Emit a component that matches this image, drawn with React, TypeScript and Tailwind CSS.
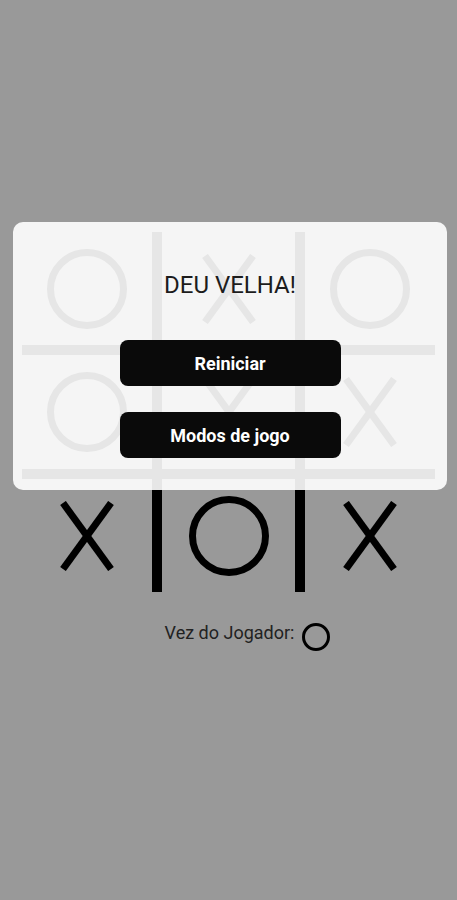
type Mark = 'X' | 'O';

const board: Mark[] = ['O', 'X', 'O', 'O', 'X', 'X', 'X', 'O', 'X'];

function XMark() {
  return (
    <svg width="56" height="70" viewBox="0 0 56 70" className="block">
      <line x1="4" y1="2" x2="52" y2="68" stroke="black" strokeWidth="7" />
      <line x1="52" y1="2" x2="4" y2="68" stroke="black" strokeWidth="7" />
    </svg>
  );
}

function OMark({ size = 80, stroke = 7 }: { size?: number; stroke?: number }) {
  const r = size / 2 - stroke / 2;
  return (
    <svg width={size} height={size} viewBox={`0 0 ${size} ${size}`} className="block">
      <circle cx={size / 2} cy={size / 2} r={r} fill="none" stroke="black" strokeWidth={stroke} />
    </svg>
  );
}

export default function App() {
  return (
    <div
      className="relative flex h-[900px] w-full flex-col items-center bg-[#999999] pt-[232px]"
      style={{ fontFamily: 'Roboto, "Liberation Sans", sans-serif' }}
    >
      <div className="grid grid-cols-[130px_133px_130px] grid-rows-[113px_114px_113px] gap-[10px] bg-black">
        {board.map((mark, i) => (
          <div key={i} className="flex items-center justify-center bg-[#999999]">
            {mark === 'X' ? <XMark /> : <OMark />}
          </div>
        ))}
      </div>

      <div className="mt-[23px] ml-[38px] flex items-center gap-[8px]">
        <span className="text-[18px] leading-[24px] text-[#222222]">Vez do Jogador:</span>
        <div className="mt-[8px]">
          <OMark size={28} stroke={3} />
        </div>
      </div>

      <div className="absolute left-[13px] top-[222px] flex h-[268px] w-[434px] flex-col items-center rounded-[10px] bg-white/90 pt-[49px]">
        <h2 className="text-[24px] leading-[28px] font-normal text-[#1c1c1c]">DEU VELHA!</h2>
        <button
          type="button"
          className="mt-[41px] flex h-[46px] w-[221px] items-center justify-center rounded-[8px] bg-[#0a0a0a] text-[18px] font-bold text-white"
        >
          Reiniciar
        </button>
        <button
          type="button"
          className="mt-[26px] flex h-[46px] w-[221px] items-center justify-center rounded-[8px] bg-[#0a0a0a] text-[18px] font-bold text-white"
        >
          Modos de jogo
        </button>
      </div>
    </div>
  );
}
